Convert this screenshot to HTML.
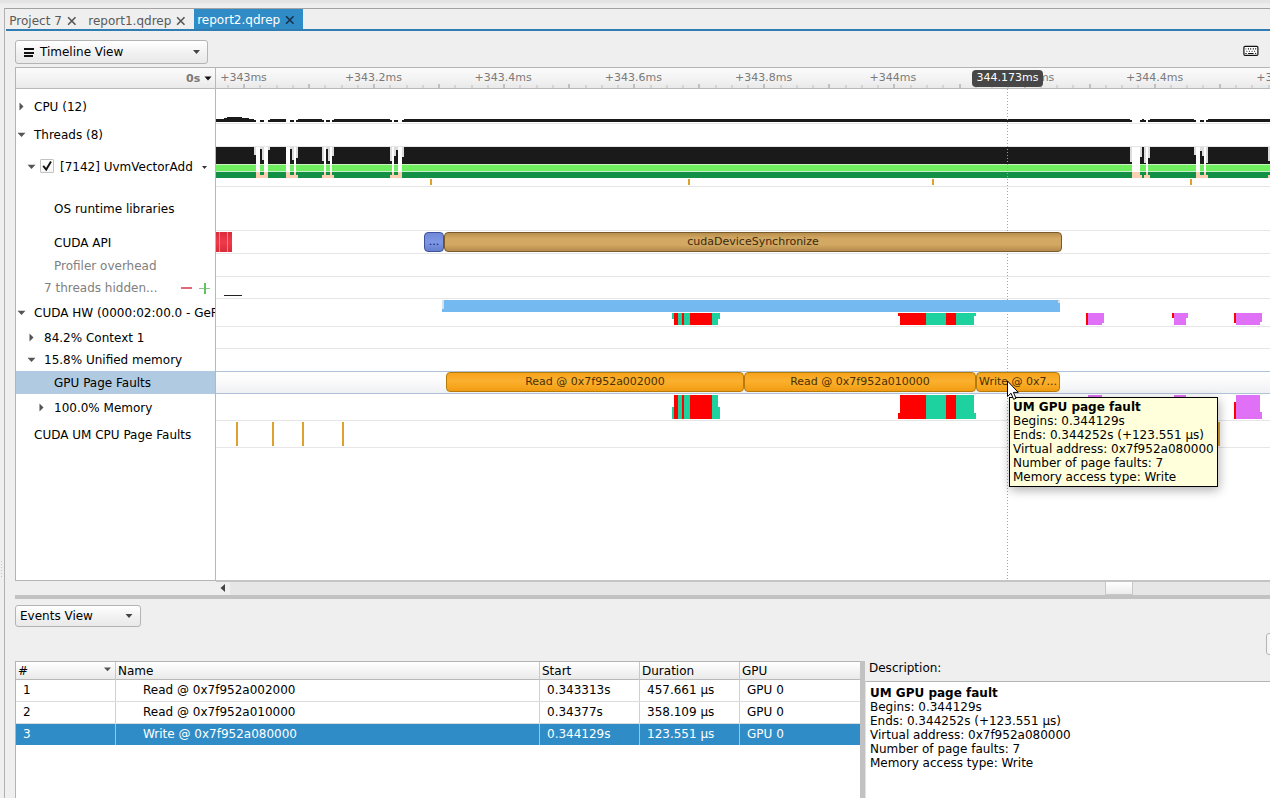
<!DOCTYPE html><html><head><meta charset="utf-8"><title>report2.qdrep</title><style>
html,body{margin:0;padding:0;}
body{width:1270px;height:798px;overflow:hidden;background:#efefef;position:relative;
 font-family:"DejaVu Sans","Liberation Sans",sans-serif;font-size:12px;color:#000;}
div{box-sizing:border-box;}
.t{position:absolute;white-space:nowrap;}
svg{position:absolute;left:0;top:0;overflow:visible}
</style></head><body>
<div style="position:absolute;left:0px;top:0px;width:1270px;height:3px;background:#e4e4e4;"></div>
<div style="position:absolute;left:0px;top:3px;width:1270px;height:5px;background:linear-gradient(#ececec,#efefef);"></div>
<div style="position:absolute;left:4px;top:8px;width:1266px;height:1px;background:#a2a2a2;"></div>
<div style="position:absolute;left:4px;top:8px;width:1px;height:790px;background:#b0b0b0;"></div>
<div style="position:absolute;left:1px;top:561px;width:1px;height:1px;background:#c4c4c4;"></div>
<div style="position:absolute;left:1px;top:564px;width:1px;height:1px;background:#c4c4c4;"></div>
<div style="position:absolute;left:1px;top:567px;width:1px;height:1px;background:#c4c4c4;"></div>
<div style="position:absolute;left:1px;top:570px;width:1px;height:1px;background:#c4c4c4;"></div>
<div style="position:absolute;left:1px;top:573px;width:1px;height:1px;background:#c4c4c4;"></div>
<div style="position:absolute;left:1px;top:576px;width:1px;height:1px;background:#c4c4c4;"></div>
<div style="position:absolute;left:194px;top:9px;width:109px;height:21px;background:#308cc6;"></div>
<div style="position:absolute;left:6px;top:29px;width:1264px;height:2px;background:#2f7db2;"></div>
<div class="t" style="left:9.3px;top:12px;font-size:12px;line-height:19px;height:19px;color:#5a5a5a;">Project 7</div>
<div class="t" style="left:88.3px;top:12px;font-size:12px;line-height:19px;height:19px;color:#5a5a5a;">report1.qdrep</div>
<div class="t" style="left:197.2px;top:11px;font-size:12px;line-height:19px;height:19px;color:#ffffff;">report2.qdrep</div>
<svg width="1270" height="798"><path d="M68.1 17.3L75.5 24.7M75.5 17.3L68.1 24.7" stroke="#555" stroke-width="1.6" fill="none"/></svg>
<svg width="1270" height="798"><path d="M177.10000000000002 17.3L184.5 24.7M184.5 17.3L177.10000000000002 24.7" stroke="#555" stroke-width="1.6" fill="none"/></svg>
<svg width="1270" height="798"><path d="M286.1 16.3L293.5 23.7M293.5 16.3L286.1 23.7" stroke="#17324a" stroke-width="1.6" fill="none"/></svg>
<div style="position:absolute;left:15px;top:40px;width:193px;height:24px;border:1px solid #b4b4b4;border-radius:3px;background:linear-gradient(#ffffff,#f0f0f0 60%,#e9e9e9);"></div>
<div style="position:absolute;left:24px;top:48px;width:10px;height:2px;background:#111;"></div>
<div style="position:absolute;left:24px;top:51.5px;width:10px;height:2px;background:#111;"></div>
<div style="position:absolute;left:24px;top:55px;width:9px;height:2px;background:#111;"></div>
<div class="t" style="left:40px;top:44px;font-size:12px;line-height:17px;height:17px;color:#000;">Timeline View</div>
<svg width="1270" height="798"><path d="M193 50 L200 50 L196.5 54 Z" fill="#444"/></svg>
<svg width="1270" height="798"><rect x="1243.9" y="46.4" width="14" height="9" rx="1.1" fill="#fff" stroke="#111" stroke-width="1.2"/><rect x="1245.4" y="48.1" width="1" height="1.5" fill="#888"/><rect x="1247.9" y="48.1" width="1" height="1.5" fill="#222"/><rect x="1250.2" y="48.1" width="1" height="1.5" fill="#222"/><rect x="1252.8" y="48.1" width="1" height="1.5" fill="#222"/><rect x="1255.2" y="48.1" width="1" height="1.5" fill="#222"/><rect x="1246.3" y="50.8" width="1.1" height="1" fill="#333"/><rect x="1248.9" y="50.8" width="1.1" height="1" fill="#333"/><rect x="1251.5" y="50.8" width="1.1" height="1" fill="#333"/><rect x="1254" y="50.8" width="1.1" height="1" fill="#333"/><rect x="1245.2" y="53" width="1.6" height="1" fill="#333"/><rect x="1248.1" y="53" width="5.5" height="1" fill="#111"/><rect x="1255.1" y="52.9" width="1.1" height="1.1" fill="#111"/></svg>
<div style="position:absolute;left:15px;top:67px;width:1255px;height:514px;background:#ffffff;border:1px solid #b4b4b4;border-right:none;"></div>
<div style="position:absolute;left:16px;top:68px;width:1254px;height:20px;background:linear-gradient(#fafafa,#f3f3f3 55%,#e9e9e9);"></div>
<div style="position:absolute;left:16px;top:88px;width:1254px;height:1px;background:#b9b9b9;"></div>
<div style="position:absolute;left:215px;top:68px;width:1px;height:512px;background:#b8b8b8;"></div>
<div class="t" style="left:186px;top:71px;font-size:11px;line-height:15px;height:15px;color:#7a7a7a;font-weight:bold;">0s</div>
<svg width="1270" height="798"><path d="M204.5 76.5 L211.5 76.5 L208 80.5 Z" fill="#111"/></svg>
<div style="position:absolute;left:227px;top:85px;width:2px;height:3px;background:#d4d4d4;"></div>
<div style="position:absolute;left:243px;top:84px;width:2px;height:4px;background:#c0c0c0;"></div>
<div style="position:absolute;left:259px;top:85px;width:2px;height:3px;background:#d4d4d4;"></div>
<div style="position:absolute;left:276px;top:85px;width:2px;height:3px;background:#d4d4d4;"></div>
<div style="position:absolute;left:292px;top:85px;width:2px;height:3px;background:#d4d4d4;"></div>
<div style="position:absolute;left:308px;top:84px;width:2px;height:4px;background:#c0c0c0;"></div>
<div style="position:absolute;left:324px;top:85px;width:2px;height:3px;background:#d4d4d4;"></div>
<div style="position:absolute;left:341px;top:85px;width:2px;height:3px;background:#d4d4d4;"></div>
<div style="position:absolute;left:357px;top:85px;width:2px;height:3px;background:#d4d4d4;"></div>
<div style="position:absolute;left:373px;top:84px;width:2px;height:4px;background:#c0c0c0;"></div>
<div style="position:absolute;left:389px;top:85px;width:2px;height:3px;background:#d4d4d4;"></div>
<div style="position:absolute;left:406px;top:85px;width:2px;height:3px;background:#d4d4d4;"></div>
<div style="position:absolute;left:422px;top:85px;width:2px;height:3px;background:#d4d4d4;"></div>
<div style="position:absolute;left:438px;top:84px;width:2px;height:4px;background:#c0c0c0;"></div>
<div style="position:absolute;left:454px;top:85px;width:2px;height:3px;background:#d4d4d4;"></div>
<div style="position:absolute;left:471px;top:85px;width:2px;height:3px;background:#d4d4d4;"></div>
<div style="position:absolute;left:487px;top:85px;width:2px;height:3px;background:#d4d4d4;"></div>
<div style="position:absolute;left:503px;top:84px;width:2px;height:4px;background:#c0c0c0;"></div>
<div style="position:absolute;left:519px;top:85px;width:2px;height:3px;background:#d4d4d4;"></div>
<div style="position:absolute;left:536px;top:85px;width:2px;height:3px;background:#d4d4d4;"></div>
<div style="position:absolute;left:552px;top:85px;width:2px;height:3px;background:#d4d4d4;"></div>
<div style="position:absolute;left:568px;top:84px;width:2px;height:4px;background:#c0c0c0;"></div>
<div style="position:absolute;left:585px;top:85px;width:2px;height:3px;background:#d4d4d4;"></div>
<div style="position:absolute;left:601px;top:85px;width:2px;height:3px;background:#d4d4d4;"></div>
<div style="position:absolute;left:617px;top:85px;width:2px;height:3px;background:#d4d4d4;"></div>
<div style="position:absolute;left:633px;top:84px;width:2px;height:4px;background:#c0c0c0;"></div>
<div style="position:absolute;left:650px;top:85px;width:2px;height:3px;background:#d4d4d4;"></div>
<div style="position:absolute;left:666px;top:85px;width:2px;height:3px;background:#d4d4d4;"></div>
<div style="position:absolute;left:682px;top:85px;width:2px;height:3px;background:#d4d4d4;"></div>
<div style="position:absolute;left:698px;top:84px;width:2px;height:4px;background:#c0c0c0;"></div>
<div style="position:absolute;left:715px;top:85px;width:2px;height:3px;background:#d4d4d4;"></div>
<div style="position:absolute;left:731px;top:85px;width:2px;height:3px;background:#d4d4d4;"></div>
<div style="position:absolute;left:747px;top:85px;width:2px;height:3px;background:#d4d4d4;"></div>
<div style="position:absolute;left:763px;top:84px;width:2px;height:4px;background:#c0c0c0;"></div>
<div style="position:absolute;left:780px;top:85px;width:2px;height:3px;background:#d4d4d4;"></div>
<div style="position:absolute;left:796px;top:85px;width:2px;height:3px;background:#d4d4d4;"></div>
<div style="position:absolute;left:812px;top:85px;width:2px;height:3px;background:#d4d4d4;"></div>
<div style="position:absolute;left:828px;top:84px;width:2px;height:4px;background:#c0c0c0;"></div>
<div style="position:absolute;left:845px;top:85px;width:2px;height:3px;background:#d4d4d4;"></div>
<div style="position:absolute;left:861px;top:85px;width:2px;height:3px;background:#d4d4d4;"></div>
<div style="position:absolute;left:877px;top:85px;width:2px;height:3px;background:#d4d4d4;"></div>
<div style="position:absolute;left:893px;top:84px;width:2px;height:4px;background:#c0c0c0;"></div>
<div style="position:absolute;left:910px;top:85px;width:2px;height:3px;background:#d4d4d4;"></div>
<div style="position:absolute;left:926px;top:85px;width:2px;height:3px;background:#d4d4d4;"></div>
<div style="position:absolute;left:942px;top:85px;width:2px;height:3px;background:#d4d4d4;"></div>
<div style="position:absolute;left:959px;top:84px;width:2px;height:4px;background:#c0c0c0;"></div>
<div style="position:absolute;left:975px;top:85px;width:2px;height:3px;background:#d4d4d4;"></div>
<div style="position:absolute;left:991px;top:85px;width:2px;height:3px;background:#d4d4d4;"></div>
<div style="position:absolute;left:1007px;top:85px;width:2px;height:3px;background:#d4d4d4;"></div>
<div style="position:absolute;left:1024px;top:84px;width:2px;height:4px;background:#c0c0c0;"></div>
<div style="position:absolute;left:1040px;top:85px;width:2px;height:3px;background:#d4d4d4;"></div>
<div style="position:absolute;left:1056px;top:85px;width:2px;height:3px;background:#d4d4d4;"></div>
<div style="position:absolute;left:1072px;top:85px;width:2px;height:3px;background:#d4d4d4;"></div>
<div style="position:absolute;left:1089px;top:84px;width:2px;height:4px;background:#c0c0c0;"></div>
<div style="position:absolute;left:1105px;top:85px;width:2px;height:3px;background:#d4d4d4;"></div>
<div style="position:absolute;left:1121px;top:85px;width:2px;height:3px;background:#d4d4d4;"></div>
<div style="position:absolute;left:1137px;top:85px;width:2px;height:3px;background:#d4d4d4;"></div>
<div style="position:absolute;left:1154px;top:84px;width:2px;height:4px;background:#c0c0c0;"></div>
<div style="position:absolute;left:1170px;top:85px;width:2px;height:3px;background:#d4d4d4;"></div>
<div style="position:absolute;left:1186px;top:85px;width:2px;height:3px;background:#d4d4d4;"></div>
<div style="position:absolute;left:1202px;top:85px;width:2px;height:3px;background:#d4d4d4;"></div>
<div style="position:absolute;left:1219px;top:84px;width:2px;height:4px;background:#c0c0c0;"></div>
<div style="position:absolute;left:1235px;top:85px;width:2px;height:3px;background:#d4d4d4;"></div>
<div style="position:absolute;left:1251px;top:85px;width:2px;height:3px;background:#d4d4d4;"></div>
<div style="position:absolute;left:1268px;top:85px;width:2px;height:3px;background:#d4d4d4;"></div>
<div class="t" style="left:220.2px;top:70px;font-size:11px;line-height:15px;color:#7a7a7a;">+343ms</div>
<div class="t" style="left:344.9px;top:70px;font-size:11px;line-height:15px;color:#7a7a7a;">+343.2ms</div>
<div class="t" style="left:474.6px;top:70px;font-size:11px;line-height:15px;color:#7a7a7a;">+343.4ms</div>
<div class="t" style="left:604.8px;top:70px;font-size:11px;line-height:15px;color:#7a7a7a;">+343.6ms</div>
<div class="t" style="left:735.0px;top:70px;font-size:11px;line-height:15px;color:#7a7a7a;">+343.8ms</div>
<div class="t" style="left:869.6px;top:70px;font-size:11px;line-height:15px;color:#7a7a7a;">+344ms</div>
<div class="t" style="left:997.2px;top:70px;font-size:11px;line-height:15px;color:#7a7a7a;">+344.2ms</div>
<div class="t" style="left:1126.0px;top:70px;font-size:11px;line-height:15px;color:#7a7a7a;">+344.4ms</div>
<div class="t" style="left:1256.3px;top:70px;font-size:11px;line-height:15px;color:#7a7a7a;">+344.6ms</div>
<div style="position:absolute;left:216px;top:123px;width:1054px;height:1px;background:#e6e6e6;"></div>
<div style="position:absolute;left:216px;top:146px;width:1054px;height:1px;background:#e6e6e6;"></div>
<div style="position:absolute;left:216px;top:186px;width:1054px;height:1px;background:#e6e6e6;"></div>
<div style="position:absolute;left:216px;top:230px;width:1054px;height:1px;background:#e6e6e6;"></div>
<div style="position:absolute;left:216px;top:253px;width:1054px;height:1px;background:#e6e6e6;"></div>
<div style="position:absolute;left:216px;top:276px;width:1054px;height:1px;background:#e6e6e6;"></div>
<div style="position:absolute;left:216px;top:298px;width:1054px;height:1px;background:#e6e6e6;"></div>
<div style="position:absolute;left:216px;top:326px;width:1054px;height:1px;background:#e6e6e6;"></div>
<div style="position:absolute;left:216px;top:348px;width:1054px;height:1px;background:#e6e6e6;"></div>
<div style="position:absolute;left:216px;top:420px;width:1054px;height:1px;background:#e6e6e6;"></div>
<div style="position:absolute;left:216px;top:447px;width:1054px;height:1px;background:#e6e6e6;"></div>
<div style="position:absolute;left:216px;top:372px;width:1054px;height:21px;background:linear-gradient(#ffffff,#fbfbfc 40%,#f0f1f3);"></div>
<div style="position:absolute;left:216px;top:371px;width:1054px;height:1px;background:#b0c2d8;"></div>
<div style="position:absolute;left:216px;top:393px;width:1054px;height:1px;background:#b0c2d8;"></div>
<div style="position:absolute;left:16px;top:371px;width:199px;height:23px;background:#b0cae2;"></div>
<div class="t" style="left:34px;top:99px;font-size:12px;line-height:17px;height:17px;color:#000;">CPU (12)</div>
<svg width="1270" height="798"><path d="M19.5 102.5 L23.5 106.5 L19.5 110.5 Z" fill="#555"/></svg>
<div class="t" style="left:34px;top:127px;font-size:12px;line-height:17px;height:17px;color:#000;">Threads (8)</div>
<svg width="1270" height="798"><path d="M17.5 132.8 L25.5 132.8 L21.5 137.0 Z" fill="#555"/></svg>
<div class="t" style="left:60px;top:159px;font-size:12px;line-height:17px;height:17px;color:#000;">[7142] UvmVectorAdd</div>
<svg width="1270" height="798"><path d="M27.5 164.8 L35.5 164.8 L31.5 169.0 Z" fill="#555"/></svg>
<div class="t" style="left:54px;top:201px;font-size:12px;line-height:17px;height:17px;color:#000;">OS runtime libraries</div>
<div class="t" style="left:54px;top:235px;font-size:12px;line-height:17px;height:17px;color:#000;">CUDA API</div>
<div class="t" style="left:54px;top:258px;font-size:12px;line-height:17px;height:17px;color:#808080;">Profiler overhead</div>
<div class="t" style="left:44px;top:280px;font-size:12px;line-height:17px;height:17px;color:#808080;">7 threads hidden...</div>
<div class="t" style="left:34px;top:305px;font-size:12px;line-height:17px;height:17px;color:#000;width:181px;overflow:hidden;">CUDA HW (0000:02:00.0 - GeF</div>
<svg width="1270" height="798"><path d="M17.5 310.8 L25.5 310.8 L21.5 315.0 Z" fill="#555"/></svg>
<div class="t" style="left:44px;top:330px;font-size:12px;line-height:17px;height:17px;color:#000;">84.2% Context 1</div>
<svg width="1270" height="798"><path d="M29.5 333.5 L33.5 337.5 L29.5 341.5 Z" fill="#555"/></svg>
<div class="t" style="left:44px;top:352px;font-size:12px;line-height:17px;height:17px;color:#000;">15.8% Unified memory</div>
<svg width="1270" height="798"><path d="M27.5 357.8 L35.5 357.8 L31.5 362.0 Z" fill="#555"/></svg>
<div class="t" style="left:54px;top:375px;font-size:12px;line-height:17px;height:17px;color:#000;">GPU Page Faults</div>
<div class="t" style="left:54px;top:400px;font-size:12px;line-height:17px;height:17px;color:#000;">100.0% Memory</div>
<svg width="1270" height="798"><path d="M39.5 403.5 L43.5 407.5 L39.5 411.5 Z" fill="#555"/></svg>
<div class="t" style="left:34px;top:427px;font-size:12px;line-height:17px;height:17px;color:#000;">CUDA UM CPU Page Faults</div>
<div style="position:absolute;left:40px;top:159px;width:14px;height:14px;border:1px solid #c2c2c2;border-radius:1px;background:linear-gradient(#ffffff,#f6f6f6);"></div>
<svg width="1270" height="798"><path d="M43.2 165.8 L46.2 169.6 L51 161.6" stroke="#111" stroke-width="1.9" fill="none"/></svg>
<svg width="1270" height="798"><path d="M202 166 L207 166 L204.5 169 Z" fill="#333"/></svg>
<div style="position:absolute;left:181px;top:287px;width:11px;height:2px;background:#dd6b77;"></div>
<div style="position:absolute;left:199px;top:287.5px;width:11px;height:1.5px;background:#8cc68c;"></div>
<div style="position:absolute;left:204px;top:283px;width:2px;height:11px;background:#5fc45f;"></div>
<svg width="1270" height="798"><rect x="216" y="119" width="1054" height="3" fill="#1a1a1a"/><rect x="224" y="118" width="25" height="1" fill="#1a1a1a"/><rect x="227" y="117" width="15" height="1" fill="#1a1a1a"/><rect x="216" y="147" width="1054" height="17" fill="#1a1a1a"/><rect x="216" y="164" width="1054" height="1" fill="#c8f5c0"/><rect x="216" y="165" width="1054" height="6" fill="#6fee60"/><rect x="216" y="171" width="1054" height="1" fill="#c8f0d0"/><rect x="216" y="172" width="1054" height="6" fill="#129045"/><rect x="254" y="147" width="2" height="8" fill="#dcdcdc"/><rect x="256" y="117" width="4" height="6" fill="#fff"/><rect x="256" y="147" width="4" height="25" fill="#fff"/><rect x="264" y="117" width="4" height="6" fill="#fff"/><rect x="264" y="147" width="4" height="25" fill="#fff"/><rect x="260" y="147" width="2" height="2" fill="#dcdcdc"/><rect x="262" y="147" width="2" height="13" fill="#dcdcdc"/><rect x="268" y="147" width="2" height="3" fill="#dcdcdc"/><rect x="260" y="117" width="4" height="3" fill="#fff"/><rect x="254" y="119" width="2" height="1" fill="#fff"/><rect x="268" y="119" width="2" height="1" fill="#fff"/><rect x="256" y="172" width="4" height="6" fill="#fbd0b2"/><rect x="264" y="172" width="4" height="6" fill="#fbd0b2"/><rect x="256" y="175" width="12" height="3" fill="#fbd0b2"/><rect x="286" y="147" width="0" height="0" fill="#dcdcdc"/><rect x="286" y="117" width="4" height="6" fill="#fff"/><rect x="286" y="147" width="4" height="25" fill="#fff"/><rect x="294" y="117" width="2" height="6" fill="#fff"/><rect x="294" y="147" width="2" height="25" fill="#fff"/><rect x="290" y="147" width="2" height="2" fill="#dcdcdc"/><rect x="292" y="147" width="2" height="13" fill="#dcdcdc"/><rect x="296" y="147" width="2" height="11" fill="#dcdcdc"/><rect x="290" y="117" width="4" height="3" fill="#fff"/><rect x="286" y="119" width="0" height="1" fill="#fff"/><rect x="296" y="119" width="2" height="1" fill="#fff"/><rect x="286" y="172" width="4" height="6" fill="#fbd0b2"/><rect x="294" y="172" width="2" height="6" fill="#fbd0b2"/><rect x="286" y="175" width="12" height="3" fill="#fbd0b2"/><rect x="322" y="147" width="2" height="14" fill="#dcdcdc"/><rect x="324" y="117" width="2" height="6" fill="#fff"/><rect x="324" y="147" width="2" height="25" fill="#fff"/><rect x="330" y="117" width="2" height="6" fill="#fff"/><rect x="330" y="147" width="2" height="25" fill="#fff"/><rect x="326" y="147" width="2" height="2" fill="#dcdcdc"/><rect x="328" y="147" width="2" height="14" fill="#dcdcdc"/><rect x="332" y="147" width="2" height="9" fill="#dcdcdc"/><rect x="326" y="117" width="4" height="3" fill="#fff"/><rect x="322" y="119" width="2" height="1" fill="#fff"/><rect x="332" y="119" width="2" height="1" fill="#fff"/><rect x="324" y="172" width="2" height="6" fill="#fbd0b2"/><rect x="330" y="172" width="2" height="6" fill="#fbd0b2"/><rect x="322" y="175" width="12" height="3" fill="#fbd0b2"/><rect x="390" y="147" width="2" height="14" fill="#dcdcdc"/><rect x="392" y="117" width="2" height="6" fill="#fff"/><rect x="392" y="147" width="2" height="25" fill="#fff"/><rect x="398" y="117" width="4" height="6" fill="#fff"/><rect x="398" y="147" width="4" height="25" fill="#fff"/><rect x="394" y="147" width="2" height="9" fill="#dcdcdc"/><rect x="396" y="147" width="2" height="3" fill="#dcdcdc"/><rect x="402" y="147" width="2" height="10" fill="#dcdcdc"/><rect x="394" y="117" width="4" height="3" fill="#fff"/><rect x="390" y="119" width="2" height="1" fill="#fff"/><rect x="402" y="119" width="2" height="1" fill="#fff"/><rect x="392" y="172" width="2" height="6" fill="#fbd0b2"/><rect x="398" y="172" width="4" height="6" fill="#fbd0b2"/><rect x="390" y="175" width="12" height="3" fill="#fbd0b2"/><rect x="1130" y="147" width="2" height="15" fill="#dcdcdc"/><rect x="1132" y="117" width="8" height="6" fill="#fff"/><rect x="1132" y="147" width="8" height="25" fill="#fff"/><rect x="1146" y="117" width="2" height="6" fill="#fff"/><rect x="1146" y="147" width="2" height="25" fill="#fff"/><rect x="1140" y="147" width="2" height="10" fill="#dcdcdc"/><rect x="1142" y="147" width="2" height="0" fill="#dcdcdc"/><rect x="1144" y="147" width="2" height="16" fill="#dcdcdc"/><rect x="1148" y="147" width="2" height="11" fill="#dcdcdc"/><rect x="1140" y="117" width="6" height="3" fill="#fff"/><rect x="1130" y="119" width="2" height="1" fill="#fff"/><rect x="1148" y="119" width="2" height="1" fill="#fff"/><rect x="1132" y="172" width="8" height="6" fill="#fbd0b2"/><rect x="1146" y="172" width="2" height="6" fill="#fbd0b2"/><rect x="1132" y="175" width="18" height="3" fill="#fbd0b2"/><rect x="1194" y="147" width="2" height="8" fill="#dcdcdc"/><rect x="1196" y="117" width="4" height="6" fill="#fff"/><rect x="1196" y="147" width="4" height="25" fill="#fff"/><rect x="1204" y="117" width="2" height="6" fill="#fff"/><rect x="1204" y="147" width="2" height="25" fill="#fff"/><rect x="1200" y="147" width="2" height="4" fill="#dcdcdc"/><rect x="1202" y="147" width="2" height="9" fill="#dcdcdc"/><rect x="1206" y="147" width="2" height="16" fill="#dcdcdc"/><rect x="1200" y="117" width="4" height="3" fill="#fff"/><rect x="1194" y="119" width="2" height="1" fill="#fff"/><rect x="1206" y="119" width="2" height="1" fill="#fff"/><rect x="1196" y="172" width="4" height="6" fill="#fbd0b2"/><rect x="1204" y="172" width="2" height="6" fill="#fbd0b2"/><rect x="1196" y="175" width="12" height="3" fill="#fbd0b2"/><rect x="1142" y="175" width="2" height="3" fill="#129045"/><rect x="1142" y="119" width="2" height="1" fill="#1a1a1a"/><rect x="1268" y="147" width="2" height="14" fill="#dcdcdc"/><rect x="1268" y="175" width="2" height="3" fill="#fbd0b2"/><rect x="430" y="179" width="2" height="6" fill="#e0a030"/><rect x="688" y="179" width="2" height="6" fill="#e0a030"/><rect x="932" y="179" width="2" height="6" fill="#e0a030"/><rect x="1190" y="179" width="2" height="6" fill="#e0a030"/><defs><linearGradient id="rg" x1="0" x2="0" y1="0" y2="1"><stop offset="0" stop-color="#d92c3c"/><stop offset=".5" stop-color="#f03a4a"/><stop offset="1" stop-color="#d92c3c"/></linearGradient></defs><rect x="216" y="232" width="16" height="20" fill="url(#rg)"/><rect x="219" y="232" width="1" height="20" fill="#f08890"/><rect x="227" y="232" width="1" height="20" fill="#f08890"/><rect x="224" y="295" width="18" height="1" fill="#222"/><rect x="442" y="300" width="618" height="12" fill="#74b9f0"/><rect x="442" y="300" width="2" height="9" fill="#d4e2ee"/><rect x="1058" y="300" width="2" height="3" fill="#d4e2ee"/><rect x="674" y="313" width="4" height="12" fill="#ff0000"/><rect x="678" y="313" width="4" height="12" fill="#1ed2a0"/><rect x="682" y="313" width="2" height="12" fill="#ff0000"/><rect x="684" y="313" width="6" height="12" fill="#1ed2a0"/><rect x="690" y="313" width="22" height="12" fill="#ff0000"/><rect x="712" y="313" width="6" height="12" fill="#1ed2a0"/><rect x="900" y="313" width="26" height="12" fill="#ff0000"/><rect x="926" y="313" width="20" height="12" fill="#1ed2a0"/><rect x="946" y="313" width="10" height="12" fill="#ff0000"/><rect x="956" y="313" width="18" height="12" fill="#1ed2a0"/><rect x="672" y="313" width="2" height="6" fill="#1ed2a0"/><rect x="718" y="313" width="2" height="6" fill="#1ed2a0"/><rect x="898" y="313" width="2" height="3" fill="#ff0000"/><rect x="974" y="313" width="2" height="3" fill="#1ed2a0"/><rect x="674" y="395" width="4" height="24" fill="#ff0000"/><rect x="678" y="395" width="4" height="24" fill="#1ed2a0"/><rect x="682" y="395" width="2" height="24" fill="#ff0000"/><rect x="684" y="395" width="6" height="24" fill="#1ed2a0"/><rect x="690" y="395" width="22" height="24" fill="#ff0000"/><rect x="712" y="395" width="6" height="24" fill="#1ed2a0"/><rect x="900" y="395" width="26" height="24" fill="#ff0000"/><rect x="926" y="395" width="20" height="24" fill="#1ed2a0"/><rect x="946" y="395" width="10" height="24" fill="#ff0000"/><rect x="956" y="395" width="18" height="24" fill="#1ed2a0"/><rect x="672" y="407" width="2" height="12" fill="#1ed2a0"/><rect x="718" y="407" width="2" height="12" fill="#1ed2a0"/><rect x="898" y="413" width="2" height="6" fill="#ff0000"/><rect x="974" y="413" width="2" height="6" fill="#1ed2a0"/><rect x="1086" y="313" width="2" height="12" fill="#ff0000"/><rect x="1088" y="313" width="16" height="10" fill="#e070f5"/><rect x="1088" y="323" width="14" height="2" fill="#e070f5"/><rect x="1172" y="313" width="2" height="5" fill="#ff0000"/><rect x="1174" y="313" width="14" height="5" fill="#e070f5"/><rect x="1174" y="318" width="12" height="7" fill="#e070f5"/><rect x="1234" y="313" width="2" height="10" fill="#ff0000"/><rect x="1236" y="313" width="26" height="9" fill="#e070f5"/><rect x="1236" y="322" width="24" height="3" fill="#e070f5"/><rect x="1088" y="395" width="14" height="2" fill="#e070f5"/><rect x="1174" y="395" width="12" height="2" fill="#e070f5"/><rect x="1236" y="395" width="24" height="24" fill="#e070f5"/><rect x="1234" y="402" width="2" height="17" fill="#ff0000"/><rect x="1260" y="412" width="2" height="7" fill="#e070f5"/><rect x="236" y="422" width="2" height="24" fill="#e0a030"/><rect x="272" y="422" width="2" height="24" fill="#e0a030"/><rect x="302" y="422" width="2" height="24" fill="#e0a030"/><rect x="342" y="422" width="2" height="24" fill="#e0a030"/><rect x="1218" y="422" width="2" height="24" fill="#e0a030"/></svg>
<div style="position:absolute;left:1007px;top:89px;width:1px;height:491px;background:repeating-linear-gradient(#a4a4a4 0 1px,transparent 1px 3px);"></div>
<div style="position:absolute;left:1004px;top:300px;width:8px;height:12px;background:#74b9f0;"></div>
<div style="position:absolute;left:424px;top:232px;width:20px;height:20px;background:linear-gradient(#6f88d8,#7f98e4 50%,#6580d0);border:1px solid #3f539a;border-radius:4px;font-size:11px;line-height:17px;color:#101c5c;text-align:center;white-space:nowrap;overflow:hidden;padding-left:0px;">...</div>
<div style="position:absolute;left:444px;top:232px;width:618px;height:20px;background:linear-gradient(#b98f50,#d2a862 30%,#d2a862 65%,#b58a4c);border:1px solid #7a5c2c;border-radius:4px;font-size:11px;line-height:17px;color:#3a2a10;text-align:center;white-space:nowrap;overflow:hidden;padding-left:0px;">cudaDeviceSynchronize</div>
<div style="position:absolute;left:446px;top:372px;width:298px;height:20px;background:linear-gradient(#f5a31c,#fbb030 45%,#f8a820 70%,#ef9c14);border:1px solid #b87a08;border-radius:4px;font-size:11px;line-height:17px;color:#4a3000;text-align:center;white-space:nowrap;overflow:hidden;padding-left:0px;">Read @ 0x7f952a002000</div>
<div style="position:absolute;left:744px;top:372px;width:232px;height:20px;background:linear-gradient(#f5a31c,#fbb030 45%,#f8a820 70%,#ef9c14);border:1px solid #b87a08;border-radius:4px;font-size:11px;line-height:17px;color:#4a3000;text-align:center;white-space:nowrap;overflow:hidden;padding-left:0px;">Read @ 0x7f952a010000</div>
<div style="position:absolute;left:976px;top:372px;width:84px;height:20px;background:linear-gradient(#f5a31c,#fbb030 45%,#f8a820 70%,#ef9c14);border:1px solid #b87a08;border-radius:4px;font-size:11px;line-height:17px;color:#4a3000;text-align:left;white-space:nowrap;overflow:hidden;padding-left:2px;">Write @ 0x7...</div>
<div style="position:absolute;left:972px;top:70px;width:71px;height:17px;background:#474747;border-radius:4px;color:#fff;font-size:11px;line-height:16px;text-align:center;">344.173ms</div>
<div style="position:absolute;left:1009px;top:397px;width:209px;height:90px;background:#ffffdc;border:1px solid #000;box-shadow:1px 3px 10px rgba(0,0,0,.32);font-size:12px;line-height:14px;padding:2px 0 0 3px;white-space:nowrap;"><b>UM GPU page fault</b><br>Begins: 0.344129s<br>Ends: 0.344252s (+123.551 µs)<br>Virtual address: 0x7f952a080000<br>Number of page faults: 7<br>Memory access type: Write</div>
<svg width="1270" height="798"><path d="M1007.5 381 L1007.5 396.5 L1011 393.2 L1013.6 399.3 L1016 398.3 L1013.4 392.4 L1018.3 392.4 Z" fill="#fff" stroke="#000" stroke-width="1"/></svg>
<div style="position:absolute;left:216px;top:581px;width:1054px;height:14px;background:#e6e6e6;"></div>
<div style="position:absolute;left:216px;top:580px;width:1054px;height:2px;background:#c4c4c4;"></div>
<div style="position:absolute;left:216px;top:582px;width:14px;height:13px;background:#efefef;"></div>
<svg width="1270" height="798"><path d="M225 584 L225 592 L220.5 588 Z" fill="#444"/></svg>
<div style="position:absolute;left:1105px;top:582px;width:28px;height:13px;background:linear-gradient(#ffffff,#ececec);border:1px solid #c8c8c8;border-top:none;"></div>
<div style="position:absolute;left:15px;top:595px;width:1255px;height:4px;background:#c2c2c2;"></div>
<div style="position:absolute;left:15px;top:605px;width:126px;height:22px;border:1px solid #b4b4b4;border-radius:3px;background:linear-gradient(#ffffff,#f0f0f0 60%,#e9e9e9);"></div>
<div class="t" style="left:20px;top:608px;font-size:12px;line-height:17px;height:17px;color:#000;">Events View</div>
<svg width="1270" height="798"><path d="M125.5 614 L132.5 614 L129 618 Z" fill="#444"/></svg>
<div style="position:absolute;left:1266px;top:633px;width:10px;height:22px;border:1px solid #b4b4b4;border-radius:3px;background:#f6f6f6;"></div>
<div style="position:absolute;left:15px;top:661px;width:846px;height:139px;background:#ffffff;border:1px solid #b4b4b4;"></div>
<div style="position:absolute;left:16px;top:662px;width:844px;height:18px;background:linear-gradient(#ffffff,#f4f4f4 50%,#e8e8e8);"></div>
<div style="position:absolute;left:16px;top:679px;width:844px;height:1px;background:#b9b9b9;"></div>
<div class="t" style="left:18px;top:663px;font-size:12px;line-height:17px;height:17px;color:#000;">#</div>
<div style="position:absolute;left:115px;top:662px;width:1px;height:18px;background:#c8c8c8;"></div>
<div class="t" style="left:118px;top:663px;font-size:12px;line-height:17px;height:17px;color:#000;">Name</div>
<div style="position:absolute;left:539px;top:662px;width:1px;height:18px;background:#c8c8c8;"></div>
<div class="t" style="left:542px;top:663px;font-size:12px;line-height:17px;height:17px;color:#000;">Start</div>
<div style="position:absolute;left:639px;top:662px;width:1px;height:18px;background:#c8c8c8;"></div>
<div class="t" style="left:642px;top:663px;font-size:12px;line-height:17px;height:17px;color:#000;">Duration</div>
<div style="position:absolute;left:739px;top:662px;width:1px;height:18px;background:#c8c8c8;"></div>
<div class="t" style="left:742px;top:663px;font-size:12px;line-height:17px;height:17px;color:#000;">GPU</div>
<svg width="1270" height="798"><path d="M104 667.5 L111 667.5 L107.5 671.3 Z" fill="#555"/></svg>
<div style="position:absolute;left:16px;top:701px;width:844px;height:1px;background:#dcdcdc;"></div>
<div style="position:absolute;left:115px;top:680px;width:1px;height:21px;background:#d0d0d0;"></div>
<div style="position:absolute;left:539px;top:680px;width:1px;height:21px;background:#d0d0d0;"></div>
<div style="position:absolute;left:639px;top:680px;width:1px;height:21px;background:#d0d0d0;"></div>
<div style="position:absolute;left:739px;top:680px;width:1px;height:21px;background:#d0d0d0;"></div>
<div class="t" style="left:23px;top:682px;font-size:12px;line-height:17px;height:17px;color:#000;">1</div>
<div class="t" style="left:143px;top:682px;font-size:12px;line-height:17px;height:17px;color:#000;">Read @ 0x7f952a002000</div>
<div class="t" style="left:547px;top:682px;font-size:12px;line-height:17px;height:17px;color:#000;">0.343313s</div>
<div class="t" style="left:647px;top:682px;font-size:12px;line-height:17px;height:17px;color:#000;">457.661 µs</div>
<div class="t" style="left:747px;top:682px;font-size:12px;line-height:17px;height:17px;color:#000;">GPU 0</div>
<div style="position:absolute;left:16px;top:723px;width:844px;height:1px;background:#dcdcdc;"></div>
<div style="position:absolute;left:115px;top:702px;width:1px;height:21px;background:#d0d0d0;"></div>
<div style="position:absolute;left:539px;top:702px;width:1px;height:21px;background:#d0d0d0;"></div>
<div style="position:absolute;left:639px;top:702px;width:1px;height:21px;background:#d0d0d0;"></div>
<div style="position:absolute;left:739px;top:702px;width:1px;height:21px;background:#d0d0d0;"></div>
<div class="t" style="left:23px;top:704px;font-size:12px;line-height:17px;height:17px;color:#000;">2</div>
<div class="t" style="left:143px;top:704px;font-size:12px;line-height:17px;height:17px;color:#000;">Read @ 0x7f952a010000</div>
<div class="t" style="left:547px;top:704px;font-size:12px;line-height:17px;height:17px;color:#000;">0.34377s</div>
<div class="t" style="left:647px;top:704px;font-size:12px;line-height:17px;height:17px;color:#000;">358.109 µs</div>
<div class="t" style="left:747px;top:704px;font-size:12px;line-height:17px;height:17px;color:#000;">GPU 0</div>
<div style="position:absolute;left:16px;top:724px;width:844px;height:21px;background:#308cc6;"></div>
<div style="position:absolute;left:115px;top:724px;width:1px;height:21px;background:#9cc4e0;"></div>
<div style="position:absolute;left:539px;top:724px;width:1px;height:21px;background:#9cc4e0;"></div>
<div style="position:absolute;left:639px;top:724px;width:1px;height:21px;background:#9cc4e0;"></div>
<div style="position:absolute;left:739px;top:724px;width:1px;height:21px;background:#9cc4e0;"></div>
<div class="t" style="left:23px;top:726px;font-size:12px;line-height:17px;height:17px;color:#fff;">3</div>
<div class="t" style="left:143px;top:726px;font-size:12px;line-height:17px;height:17px;color:#fff;">Write @ 0x7f952a080000</div>
<div class="t" style="left:547px;top:726px;font-size:12px;line-height:17px;height:17px;color:#fff;">0.344129s</div>
<div class="t" style="left:647px;top:726px;font-size:12px;line-height:17px;height:17px;color:#fff;">123.551 µs</div>
<div class="t" style="left:747px;top:726px;font-size:12px;line-height:17px;height:17px;color:#fff;">GPU 0</div>
<div style="position:absolute;left:860px;top:661px;width:5px;height:137px;background:#c2c2c2;"></div>
<div class="t" style="left:869px;top:660px;font-size:12px;line-height:17px;height:17px;color:#000;">Description:</div>
<div style="position:absolute;left:865px;top:681px;width:407px;height:119px;background:#fff;border:1px solid #b4b4b4;border-left:1px solid #e2e2e2;"></div>
<div class="t" style="left:870px;top:686px;font-size:12px;line-height:14px;"><b>UM GPU page fault</b><br>Begins: 0.344129s<br>Ends: 0.344252s (+123.551 µs)<br>Virtual address: 0x7f952a080000<br>Number of page faults: 7<br>Memory access type: Write</div>
</body></html>
